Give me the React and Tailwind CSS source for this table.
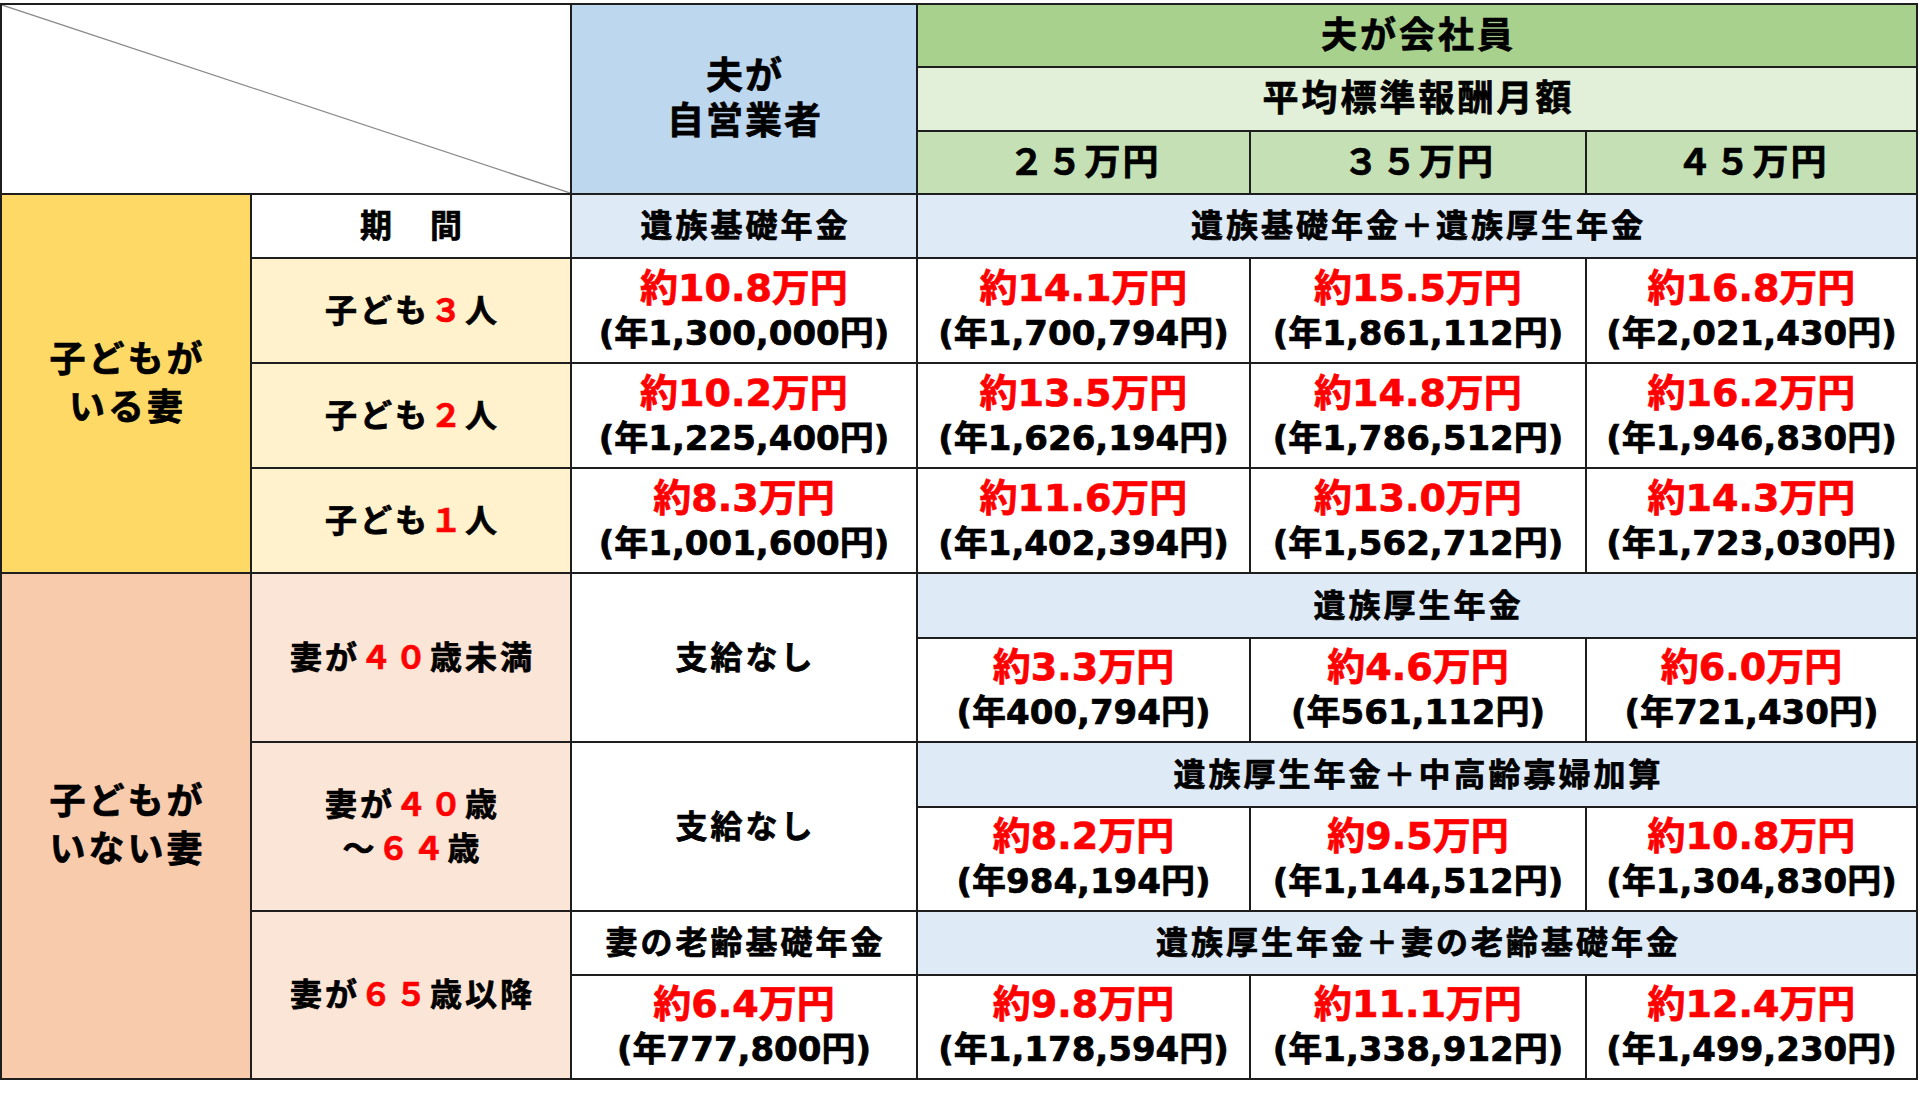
import React from "react";

const CJK = "font-['DejaVu_Sans','Noto_Sans_CJK_JP',sans-serif]";

function Amount({ pos, red, black, bg = "bg-white" }) {
  return (
    <div className={`${pos} ${bg} flex flex-col items-center justify-center`}>
      <span className="text-[38px] leading-[45px] text-[#ff0000]">{red}</span>
      <span className="text-[34px] leading-[45px] text-black">{black}</span>
    </div>
  );
}

function Label({ pos, bg, children, size = "text-[32px] tracking-[3px] pl-[3px]" }) {
  return (
    <div className={`${pos} ${bg} flex flex-col items-center justify-center text-black ${size}`}>
      {children}
    </div>
  );
}

const R = (t) => <span className="text-[#ff0000]">{t}</span>;

export default function App() {
  return (
    <div className={`w-[1920px] h-[1094px] bg-white overflow-hidden ${CJK} font-bold [-webkit-text-stroke:0.7px_currentcolor]`}>
      <div className="mt-[3px] w-[1918px] grid grid-cols-[248px_318px_344px_331px_334px_329px] grid-rows-[61px_62px_61px_62px_103px_103px_103px_63px_102px_63px_102px_62px_102px] gap-[2px] p-[2px] bg-[#1e1e1e]">
        {/* header */}
        <div className="col-start-1 col-span-2 row-start-1 row-span-3 bg-white relative">
          <svg className="absolute inset-0 w-full h-full" viewBox="0 0 568 188" preserveAspectRatio="none">
            <line x1="0" y1="0" x2="568" y2="188" stroke="#8a8a8a" strokeWidth="1.3" />
          </svg>
        </div>
        <Label pos="col-start-3 row-start-1 row-span-3" bg="bg-[#bdd7ee]" size="text-[37px] leading-[45px] tracking-[2px] pl-[2px]">
          <span>夫が</span>
          <span>自営業者</span>
        </Label>
        <Label pos="col-start-4 col-span-3 row-start-1" bg="bg-[#a9d18e]" size="text-[36px] tracking-[3px] pl-[3px]">夫が会社員</Label>
        <Label pos="col-start-4 col-span-3 row-start-2" bg="bg-[#e2f0d9]" size="text-[36px] tracking-[3px] pl-[3px]">平均標準報酬月額</Label>
        <Label pos="col-start-4 row-start-3" bg="bg-[#c5e0b4]" size="text-[36px] tracking-[2px] pl-[2px]">２５万円</Label>
        <Label pos="col-start-5 row-start-3" bg="bg-[#c5e0b4]" size="text-[36px] tracking-[2px] pl-[2px]">３５万円</Label>
        <Label pos="col-start-6 row-start-3" bg="bg-[#c5e0b4]" size="text-[36px] tracking-[2px] pl-[2px]">４５万円</Label>

        {/* with children */}
        <Label pos="col-start-1 row-start-4 row-span-4" bg="bg-[#ffd966]" size="text-[36px] leading-[48px] tracking-[3px] pl-[3px]">
          <span>子どもが</span>
          <span>いる妻</span>
        </Label>
        <Label pos="col-start-2 row-start-4" bg="bg-white">期　間</Label>
        <Label pos="col-start-3 row-start-4" bg="bg-[#deebf7]">遺族基礎年金</Label>
        <Label pos="col-start-4 col-span-3 row-start-4" bg="bg-[#deebf7]">遺族基礎年金＋遺族厚生年金</Label>

        <Label pos="col-start-2 row-start-5" bg="bg-[#fff2cc]"><span>子ども{R("３")}人</span></Label>
        <Label pos="col-start-2 row-start-6" bg="bg-[#fff2cc]"><span>子ども{R("２")}人</span></Label>
        <Label pos="col-start-2 row-start-7" bg="bg-[#fff2cc]"><span>子ども{R("１")}人</span></Label>

        <Amount pos="col-start-3 row-start-5" red="約10.8万円" black="(年1,300,000円)" />
        <Amount pos="col-start-4 row-start-5" red="約14.1万円" black="(年1,700,794円)" />
        <Amount pos="col-start-5 row-start-5" red="約15.5万円" black="(年1,861,112円)" />
        <Amount pos="col-start-6 row-start-5" red="約16.8万円" black="(年2,021,430円)" />

        <Amount pos="col-start-3 row-start-6" red="約10.2万円" black="(年1,225,400円)" />
        <Amount pos="col-start-4 row-start-6" red="約13.5万円" black="(年1,626,194円)" />
        <Amount pos="col-start-5 row-start-6" red="約14.8万円" black="(年1,786,512円)" />
        <Amount pos="col-start-6 row-start-6" red="約16.2万円" black="(年1,946,830円)" />

        <Amount pos="col-start-3 row-start-7" red="約8.3万円" black="(年1,001,600円)" />
        <Amount pos="col-start-4 row-start-7" red="約11.6万円" black="(年1,402,394円)" />
        <Amount pos="col-start-5 row-start-7" red="約13.0万円" black="(年1,562,712円)" />
        <Amount pos="col-start-6 row-start-7" red="約14.3万円" black="(年1,723,030円)" />

        {/* without children */}
        <Label pos="col-start-1 row-start-8 row-span-6" bg="bg-[#f8cbad]" size="text-[36px] leading-[48px] tracking-[3px] pl-[3px]">
          <span>子どもが</span>
          <span>いない妻</span>
        </Label>

        <Label pos="col-start-2 row-start-8 row-span-2" bg="bg-[#fbe5d6]"><span>妻が{R("４０")}歳未満</span></Label>
        <Label pos="col-start-3 row-start-8 row-span-2" bg="bg-white">支給なし</Label>
        <Label pos="col-start-4 col-span-3 row-start-8" bg="bg-[#deebf7]">遺族厚生年金</Label>
        <Amount pos="col-start-4 row-start-9" red="約3.3万円" black="(年400,794円)" />
        <Amount pos="col-start-5 row-start-9" red="約4.6万円" black="(年561,112円)" />
        <Amount pos="col-start-6 row-start-9" red="約6.0万円" black="(年721,430円)" />

        <Label pos="col-start-2 row-start-10 row-span-2" bg="bg-[#fbe5d6]" size="text-[32px] leading-[44px] tracking-[3px] pl-[3px]">
          <span>妻が{R("４０")}歳</span>
          <span>〜{R("６４")}歳</span>
        </Label>
        <Label pos="col-start-3 row-start-10 row-span-2" bg="bg-white">支給なし</Label>
        <Label pos="col-start-4 col-span-3 row-start-10" bg="bg-[#deebf7]">遺族厚生年金＋中高齢寡婦加算</Label>
        <Amount pos="col-start-4 row-start-11" red="約8.2万円" black="(年984,194円)" />
        <Amount pos="col-start-5 row-start-11" red="約9.5万円" black="(年1,144,512円)" />
        <Amount pos="col-start-6 row-start-11" red="約10.8万円" black="(年1,304,830円)" />

        <Label pos="col-start-2 row-start-12 row-span-2" bg="bg-[#fbe5d6]"><span>妻が{R("６５")}歳以降</span></Label>
        <Label pos="col-start-3 row-start-12" bg="bg-white">妻の老齢基礎年金</Label>
        <Label pos="col-start-4 col-span-3 row-start-12" bg="bg-[#deebf7]">遺族厚生年金＋妻の老齢基礎年金</Label>
        <Amount pos="col-start-3 row-start-13" red="約6.4万円" black="(年777,800円)" />
        <Amount pos="col-start-4 row-start-13" red="約9.8万円" black="(年1,178,594円)" />
        <Amount pos="col-start-5 row-start-13" red="約11.1万円" black="(年1,338,912円)" />
        <Amount pos="col-start-6 row-start-13" red="約12.4万円" black="(年1,499,230円)" />
      </div>
    </div>
  );
}
